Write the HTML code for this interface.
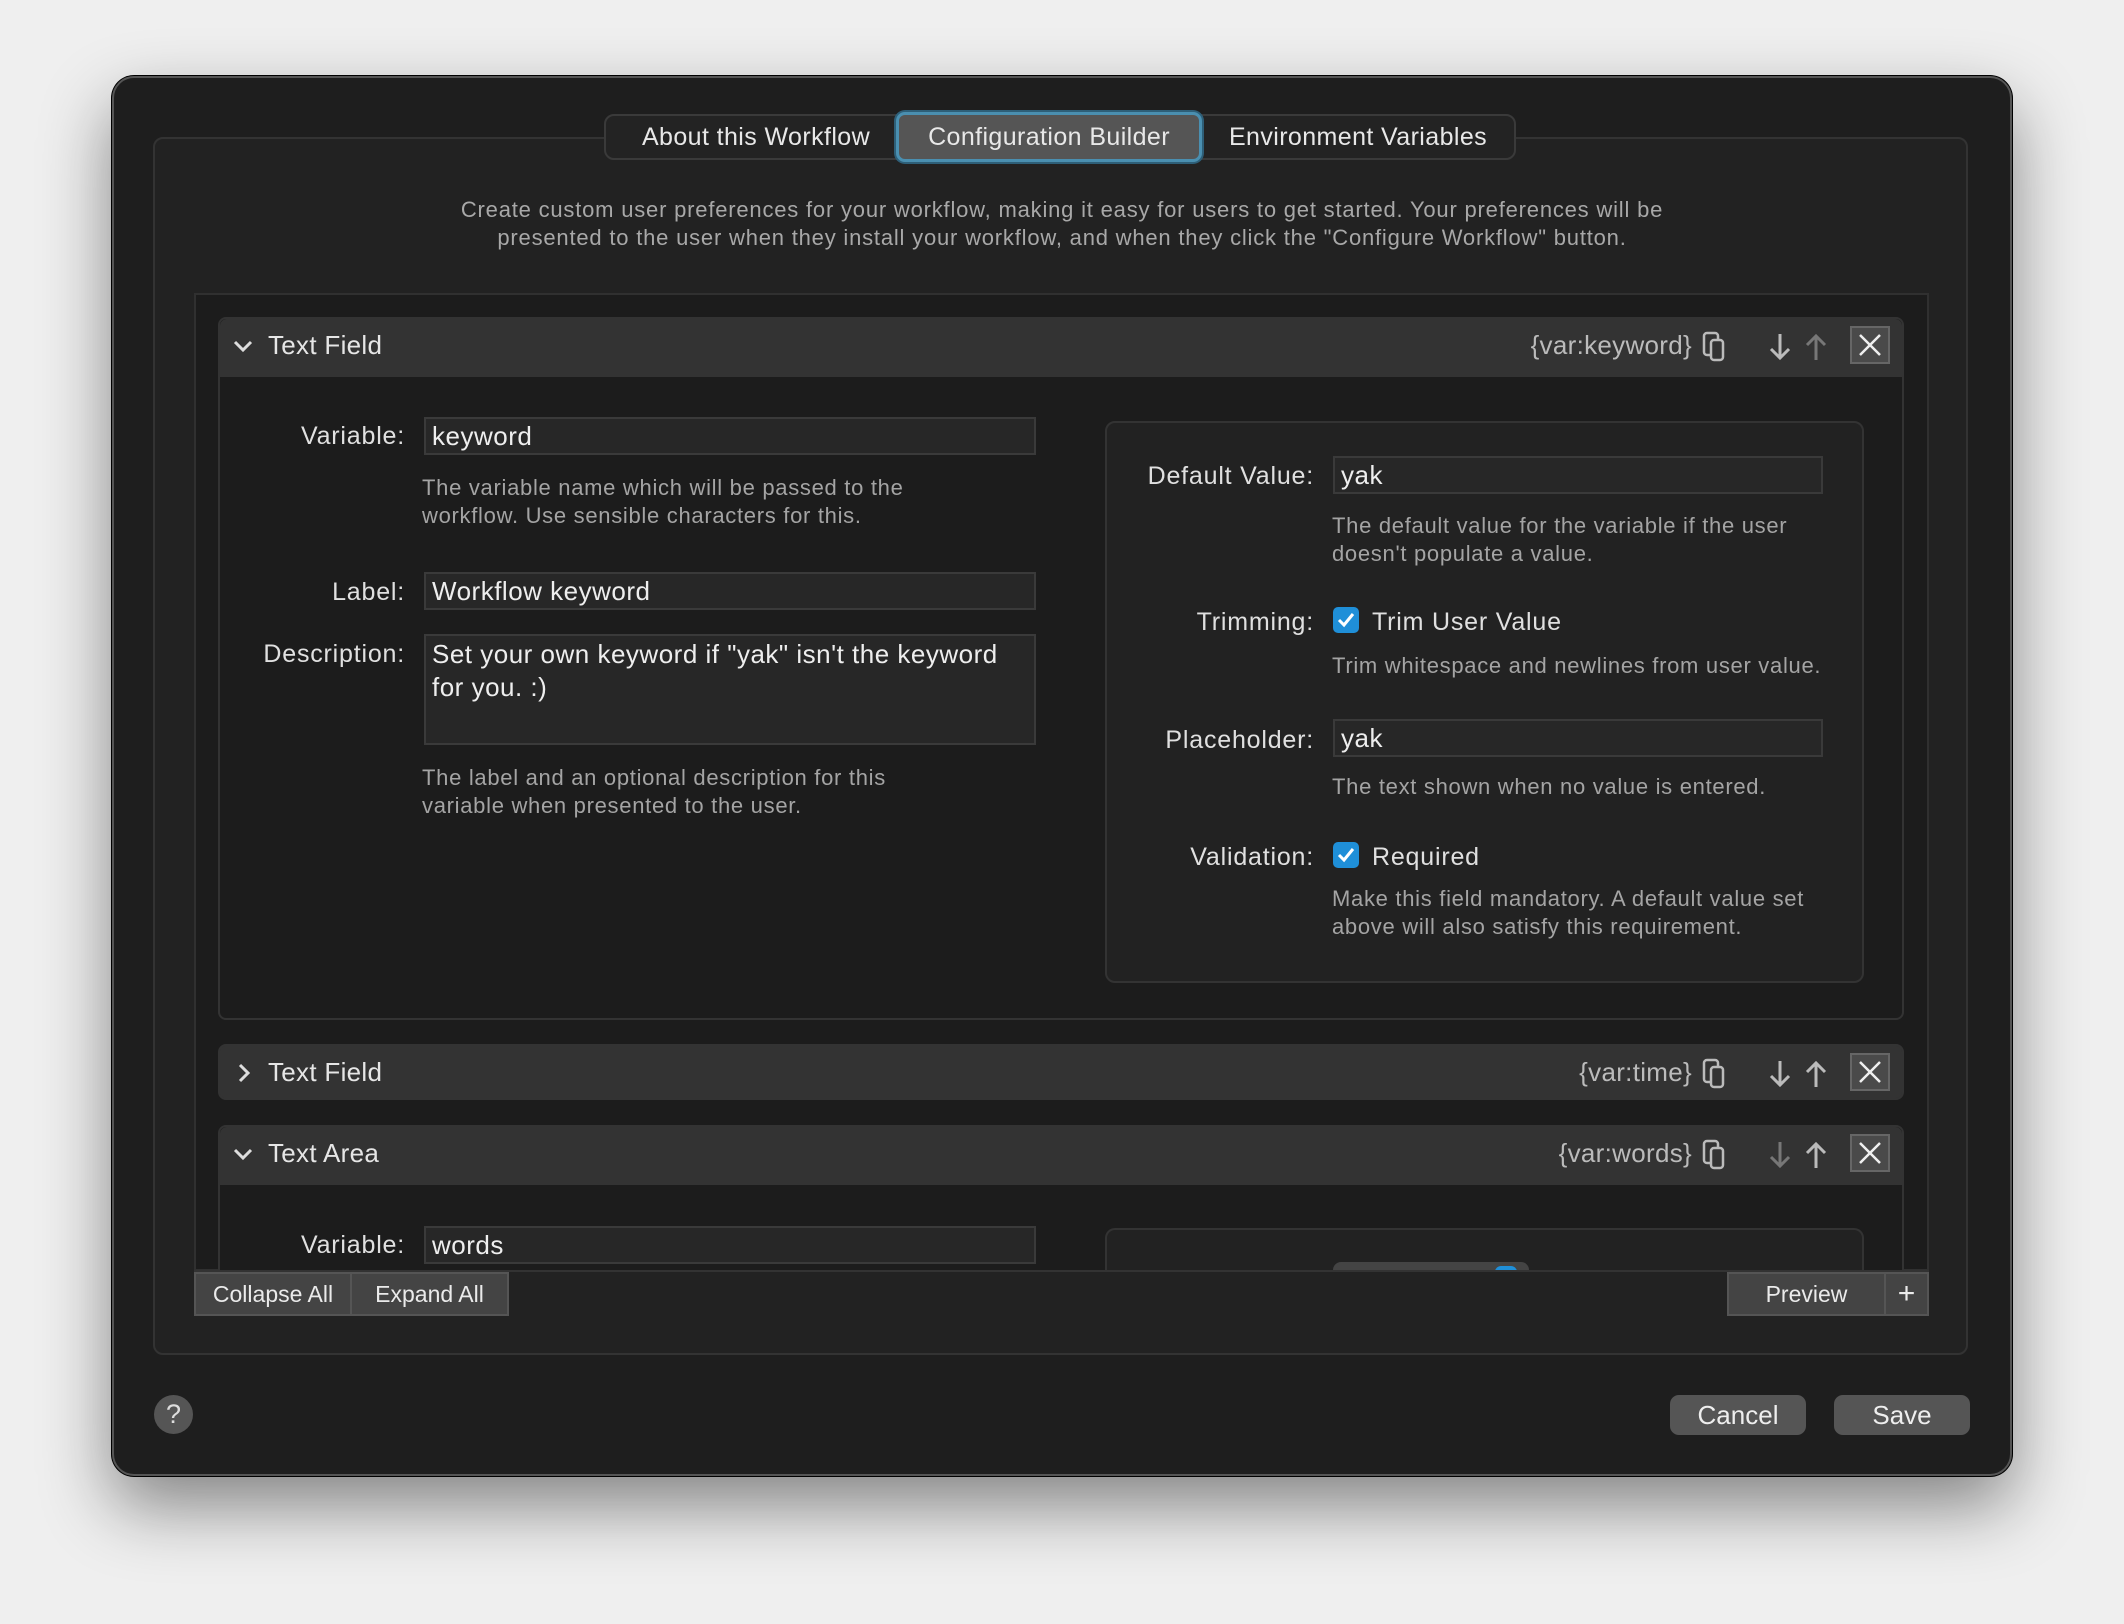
<!DOCTYPE html>
<html><head><meta charset="utf-8"><style>
*{box-sizing:border-box;margin:0;padding:0}
body{width:2124px;height:1624px;background:#efefef;font-family:"Liberation Sans",sans-serif;position:relative;overflow:hidden;color:#dedede}
.a{position:absolute}
.win{left:112px;top:76px;width:1900px;height:1400px;background:#1e1e1e;border-radius:22px;border:2px solid #555;box-shadow:0 30px 70px rgba(0,0,0,.45),0 0 0 1px #000}
.box{left:153px;top:137px;width:1815px;height:1218px;background:#222;border:2px solid #333;border-radius:10px}
.tabs{left:604px;top:114px;width:912px;height:46px;border:2px solid #3a3a3a;border-radius:10px;background:#232323}
.tab{position:absolute;top:0;height:42px;line-height:42px;font-size:25px;color:#e8e8e8;text-align:center;letter-spacing:.4px}
.sel{left:290px;width:306px;top:-4px;height:50px;line-height:44px;background:#555;border:3px solid #4a8fb0;border-radius:9px;box-shadow:0 0 0 2px #2e5f78}
.desc{left:200px;width:1724px;top:196px;text-align:center;font-size:22px;line-height:28px;color:#a8a8a8;letter-spacing:.8px}
.scroll{left:194px;top:293px;width:1735px;height:978px;background:#1c1c1c;border:2px solid #303030;overflow:hidden}
.sec{border:2px solid #333;border-radius:8px;background:#1c1c1c}
.hdr{background:#333;border-radius:7px 7px 0 0;height:58px}
.ht{font-size:26px;color:#e6e6e6;letter-spacing:.3px}
.lbl{font-size:25px;color:#e0e0e0;text-align:right;letter-spacing:.8px}
.inp{background:#272727;border:2px solid #3a3a3a;font-size:26px;color:#eee;padding-left:6px;line-height:34px;letter-spacing:.5px}
.help{font-size:22px;line-height:28px;color:#a4a4a4;letter-spacing:.7px}
.panel{background:#222;border:2px solid #333;border-radius:10px}
.cb{width:26px;height:26px;background:#1f8fd8;border-radius:5px}
.btn{background:#444;border:2px solid #555;font-size:23px;color:#eaeaea;text-align:center;line-height:40px}
.pb{background:#555;border-radius:9px;font-size:26px;color:#eee;text-align:center;line-height:40px}
</style></head><body>
<div class="a win"></div>
<div class="a box"></div>
<div class="a tabs">
<div class="tab" style="left:10px;width:280px">About this Workflow</div>
<div class="tab sel">Configuration Builder</div>
<div class="tab" style="left:596px;width:312px">Environment Variables</div>
</div>
<div class="a desc">Create custom user preferences for your workflow, making it easy for users to get started. Your preferences will be<br>presented to the user when they install your workflow, and when they click the "Configure Workflow" button.</div>

<div class="a scroll"></div>
<div class="a sec" style="left:218px;top:317px;width:1686px;height:703px"><div class="hdr"></div></div>
<svg class="a" style="left:232px;top:336px" width="22" height="20"><path d="M3 6l8 8 8-8" stroke="#ddd" stroke-width="3" fill="none"/></svg>
<div class="a ht" style="left:268px;top:330px">Text Field</div>
<div class="a ht" style="left:1400px;width:292px;top:330px;text-align:right;color:#bbb">{var:keyword}</div>
<svg class="a" style="left:1700px;top:330px" width="34" height="34"><rect x="4" y="3" width="14" height="22" rx="3" stroke="#bbb" stroke-width="2.5" fill="none"/><rect x="11" y="10" width="12" height="20" rx="3" stroke="#bbb" stroke-width="2.5" fill="#333"/></svg>
<svg class="a" style="left:1766px;top:330px" width="70" height="34"><path d="M14 4v24M5 19l9 9 9-9" stroke="#bbb" stroke-width="3" fill="none"/><path d="M50 30v-24M41 15l9-9 9 9" stroke="#777" stroke-width="3" fill="none"/></svg>
<svg class="a" style="left:1850px;top:326px" width="40" height="38"><rect x="1" y="1" width="38" height="36" fill="#4a4a4a" stroke="#666" stroke-width="2"/><path d="M10 9l20 20M30 9l-20 20" stroke="#eee" stroke-width="2.5"/></svg>

<div class="a lbl" style="left:200px;width:205px;top:422px">Variable:</div>
<div class="a inp" style="left:424px;top:417px;width:612px;height:38px">keyword</div>
<div class="a help" style="left:422px;top:474px">The variable name which will be passed to the<br>workflow. Use sensible characters for this.</div>
<div class="a lbl" style="left:200px;width:205px;top:578px">Label:</div>
<div class="a inp" style="left:424px;top:572px;width:612px;height:38px">Workflow keyword</div>
<div class="a lbl" style="left:200px;width:205px;top:640px">Description:</div>
<div class="a inp" style="left:424px;top:634px;width:612px;height:111px;line-height:33px;padding-top:2px">Set your own keyword if "yak" isn't the keyword<br>for you. :)</div>
<div class="a help" style="left:422px;top:764px">The label and an optional description for this<br>variable when presented to the user.</div>

<div class="a panel" style="left:1105px;top:421px;width:759px;height:562px"></div>
<div class="a lbl" style="left:1100px;width:214px;top:462px">Default Value:</div>
<div class="a inp" style="left:1333px;top:456px;width:490px;height:38px">yak</div>
<div class="a help" style="left:1332px;top:512px">The default value for the variable if the user<br>doesn't populate a value.</div>
<div class="a lbl" style="left:1100px;width:214px;top:608px">Trimming:</div>
<svg class="a cb" style="left:1333px;top:607px"><path d="M6 13l5 5 9-11" stroke="#fff" stroke-width="3" fill="none"/></svg>
<div class="a lbl" style="left:1372px;top:608px;text-align:left">Trim User Value</div>
<div class="a help" style="left:1332px;top:652px">Trim whitespace and newlines from user value.</div>
<div class="a lbl" style="left:1100px;width:214px;top:726px">Placeholder:</div>
<div class="a inp" style="left:1333px;top:719px;width:490px;height:38px">yak</div>
<div class="a help" style="left:1332px;top:773px">The text shown when no value is entered.</div>
<div class="a lbl" style="left:1100px;width:214px;top:843px">Validation:</div>
<svg class="a cb" style="left:1333px;top:842px"><path d="M6 13l5 5 9-11" stroke="#fff" stroke-width="3" fill="none"/></svg>
<div class="a lbl" style="left:1372px;top:843px;text-align:left">Required</div>
<div class="a help" style="left:1332px;top:885px">Make this field mandatory. A default value set<br>above will also satisfy this requirement.</div>

<div class="a sec" style="left:218px;top:1044px;width:1686px;height:56px;background:#333"></div>
<svg class="a" style="left:234px;top:1062px" width="20" height="22"><path d="M6 3l8 8-8 8" stroke="#ddd" stroke-width="3" fill="none"/></svg>
<div class="a ht" style="left:268px;top:1057px">Text Field</div>
<div class="a ht" style="left:1400px;width:292px;top:1057px;text-align:right;color:#bbb">{var:time}</div>
<svg class="a" style="left:1700px;top:1057px" width="34" height="34"><rect x="4" y="3" width="14" height="22" rx="3" stroke="#bbb" stroke-width="2.5" fill="none"/><rect x="11" y="10" width="12" height="20" rx="3" stroke="#bbb" stroke-width="2.5" fill="#333"/></svg>
<svg class="a" style="left:1766px;top:1057px" width="70" height="34"><path d="M14 4v24M5 19l9 9 9-9" stroke="#bbb" stroke-width="3" fill="none"/><path d="M50 30v-24M41 15l9-9 9 9" stroke="#bbb" stroke-width="3" fill="none"/></svg>
<svg class="a" style="left:1850px;top:1053px" width="40" height="38"><rect x="1" y="1" width="38" height="36" fill="#4a4a4a" stroke="#666" stroke-width="2"/><path d="M10 9l20 20M30 9l-20 20" stroke="#eee" stroke-width="2.5"/></svg>

<div class="a sec" style="left:218px;top:1125px;width:1686px;height:146px;border-bottom:none;border-radius:8px 8px 0 0"><div class="hdr"></div></div>
<svg class="a" style="left:232px;top:1144px" width="22" height="20"><path d="M3 6l8 8 8-8" stroke="#ddd" stroke-width="3" fill="none"/></svg>
<div class="a ht" style="left:268px;top:1138px">Text Area</div>
<div class="a ht" style="left:1400px;width:292px;top:1138px;text-align:right;color:#bbb">{var:words}</div>
<svg class="a" style="left:1700px;top:1138px" width="34" height="34"><rect x="4" y="3" width="14" height="22" rx="3" stroke="#bbb" stroke-width="2.5" fill="none"/><rect x="11" y="10" width="12" height="20" rx="3" stroke="#bbb" stroke-width="2.5" fill="#333"/></svg>
<svg class="a" style="left:1766px;top:1138px" width="70" height="34"><path d="M14 4v24M5 19l9 9 9-9" stroke="#777" stroke-width="3" fill="none"/><path d="M50 30v-24M41 15l9-9 9 9" stroke="#bbb" stroke-width="3" fill="none"/></svg>
<svg class="a" style="left:1850px;top:1134px" width="40" height="38"><rect x="1" y="1" width="38" height="36" fill="#4a4a4a" stroke="#666" stroke-width="2"/><path d="M10 9l20 20M30 9l-20 20" stroke="#eee" stroke-width="2.5"/></svg>
<div class="a lbl" style="left:200px;width:205px;top:1231px">Variable:</div>
<div class="a inp" style="left:424px;top:1226px;width:612px;height:38px">words</div>
<div class="a panel" style="left:1105px;top:1228px;width:759px;height:80px;border-bottom:none"></div>
<div class="a" style="left:1333px;top:1262px;width:196px;height:20px;background:#444;border-radius:8px 8px 0 0"></div>
<div class="a" style="left:1495px;top:1266px;width:22px;height:10px;background:#1f8fd8;border-radius:6px 6px 0 0"></div>

<div class="a" style="left:194px;top:1270px;width:1735px;height:46px;background:#222;border-top:2px solid #333"></div>
<div class="a btn" style="left:194px;top:1272px;width:158px;height:44px">Collapse All</div>
<div class="a btn" style="left:350px;top:1272px;width:159px;height:44px">Expand All</div>
<div class="a btn" style="left:1727px;top:1272px;width:159px;height:44px">Preview</div>
<div class="a btn" style="left:1884px;top:1272px;width:45px;height:44px;font-size:30px">+</div>

<div class="a" style="left:154px;top:1395px;width:39px;height:39px;border-radius:50%;background:#555;text-align:center;line-height:39px;font-size:27px;color:#ddd">?</div>
<div class="a pb" style="left:1670px;top:1395px;width:136px;height:40px">Cancel</div>
<div class="a pb" style="left:1834px;top:1395px;width:136px;height:40px">Save</div>
</body></html>
